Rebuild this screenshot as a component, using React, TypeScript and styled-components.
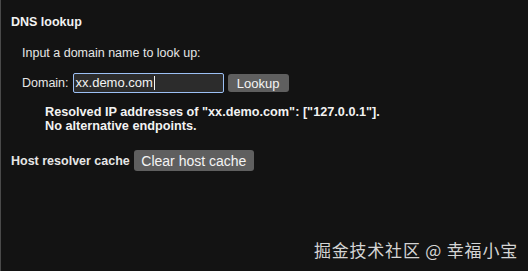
import React from "react";
import styled, { createGlobalStyle } from "styled-components";

const Global = createGlobalStyle`
  html, body { margin: 0; padding: 0; background: #131313; }
  #root { width: 528px; height: 271px; }
`;

const Page = styled.div`
  position: relative;
  box-sizing: border-box;
  width: 528px;
  height: 271px;
  background: #131313;
  border-left: 1px solid #4a4a4a;
  padding: 14px 0 0 10px;
  font-family: "Liberation Sans", Arial, sans-serif;
  font-size: 12.5px;
  color: #e6e6e6;
  display: flex;
  flex-direction: column;
  align-items: flex-start;
`;

const Heading = styled.div`
  font-weight: bold;
  line-height: 16px;
  color: #f2f2f2;
`;

const Block = styled.div`
  display: flex;
  flex-direction: column;
  align-items: flex-start;
  padding-left: 11px;
`;

const Prompt = styled.div`
  margin-top: 15px;
  line-height: 16px;
`;

const Row = styled.div<{ $top: number }>`
  display: flex;
  align-items: center;
  gap: 4px;
  margin-top: ${(p) => p.$top}px;
`;

const Label = styled.span<{ $bold?: boolean }>`
  line-height: 16px;
  font-weight: ${(p) => (p.$bold ? "bold" : "normal")};
`;

const Input = styled.div`
  box-sizing: border-box;
  width: 151px;
  height: 20px;
  border: 1px solid #9cc0f5;
  border-radius: 2px;
  background: #2c2c2c;
  color: #f4f4f4;
  font-size: 13px;
  line-height: 18px;
  padding-left: 2px;
  display: flex;
  align-items: center;
`;

const Caret = styled.span`
  display: inline-block;
  width: 1px;
  height: 14px;
  background: #f4f4f4;
  margin-left: 1px;
`;

const Button = styled.button<{ $w: number; $h: number; $fs: number }>`
  box-sizing: border-box;
  width: ${(p) => p.$w}px;
  height: ${(p) => p.$h}px;
  border: none;
  border-radius: 3px;
  background: #5f5f5f;
  color: #f4f4f4;
  font-family: "Liberation Sans", Arial, sans-serif;
  font-size: ${(p) => p.$fs}px;
  padding: 0;
  display: flex;
  align-items: center;
  justify-content: center;
`;

const Result = styled.div`
  margin-top: 12px;
  margin-left: 23px;
  font-weight: bold;
  font-size: 12.7px;
  line-height: 14px;
  color: #f2f2f2;
`;

const Watermark = styled.div`
  position: absolute;
  right: 10px;
  bottom: 11px;
  font-family: "Noto Sans CJK SC", sans-serif;
  font-size: 17px;
  line-height: 20px;
  color: #d4d4d4;
  letter-spacing: 0.8px;
`;

export default function App() {
  return (
    <>
      <Global />
      <Page>
        <Heading>DNS lookup</Heading>
        <Block>
          <Prompt>Input a domain name to look up:</Prompt>
          <Row $top={12}>
            <Label>Domain:</Label>
            <Input>
              xx.demo.com
              <Caret />
            </Input>
            <Button $w={61} $h={18} $fs={13}>
              Lookup
            </Button>
          </Row>
          <Result>
            Resolved IP addresses of "xx.demo.com": ["127.0.0.1"].
            <br />
            No alternative endpoints.
          </Result>
        </Block>
        <Row $top={17}>
          <Label $bold>Host resolver cache</Label>
          <Button $w={120} $h={21} $fs={14}>
            Clear host cache
          </Button>
        </Row>
        <Watermark>掘金技术社区 @ 幸福小宝</Watermark>
      </Page>
    </>
  );
}
